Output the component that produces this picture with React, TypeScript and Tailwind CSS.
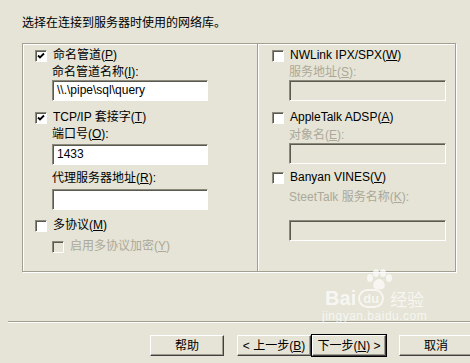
import React from 'react';

const FONT = { fontFamily: '"Liberation Sans", "Noto Sans CJK SC", sans-serif' };

const Key = ({ k }: { k: string }) => <>(<span className="underline underline-offset-[1px]">{k}</span>)</>;

const Check = ({ checked, disabled }: { checked?: boolean; disabled?: boolean }) => (
  <span
    className={`flex h-[12px] w-[12px] shrink-0 items-center justify-center border border-t-[#8a897b] border-l-[#8a897b] border-b-white border-r-white shadow-[inset_1px_1px_0_#5a5a50] ${
      disabled ? 'bg-[#e5e4d6]' : 'bg-white'
    }`}
  >
    {checked && (
      <svg width="8" height="8" viewBox="0 0 8 8">
        <path d="M1 3.5 L3 5.5 L7 1.5" stroke="#000" strokeWidth="1.8" fill="none" />
      </svg>
    )}
  </span>
);

const Field = ({ value, disabled, w }: { value?: string; disabled?: boolean; w: string }) => (
  <div
    className={`${w} h-[21px] border border-t-[#8a897b] border-l-[#8a897b] border-b-white border-r-white shadow-[inset_1px_1px_0_#5a5a50] px-[4px] text-[12px] leading-[19px] ${
      disabled ? 'bg-[#e5e4d6]' : 'bg-white'
    }`}
  >
    {value}
  </div>
);

const Row = ({ checked, disabled, children, className = '' }: { checked?: boolean; disabled?: boolean; children: React.ReactNode; className?: string }) => (
  <div className={`flex h-[13px] items-center gap-[6px] ${className}`}>
    <Check checked={checked} disabled={disabled} />
    <span className={`text-[12px] leading-[13px] whitespace-nowrap ${disabled ? 'text-[#aca899]' : 'text-black'}`}>{children}</span>
  </div>
);

const Label = ({ children, disabled, className = '' }: { children: React.ReactNode; disabled?: boolean; className?: string }) => (
  <div className={`h-[13px] text-[12px] leading-[13px] whitespace-nowrap ${disabled ? 'text-[#aca899]' : 'text-black'} ${className}`}>{children}</div>
);

const Btn = ({ children, primary, className = '' }: { children: React.ReactNode; primary?: boolean; className?: string }) => (
  <div className={`${primary ? 'border border-black' : ''} ${className}`}>
    <div className="flex h-[21px] w-[74px] items-center justify-center border border-t-white border-l-white border-b-[#404040] border-r-[#404040] shadow-[inset_-1px_-1px_0_#9d9c8e] text-[12px] text-black whitespace-nowrap">
      {children}
    </div>
  </div>
);

export default function App() {
  return (
    <div className="relative h-[363px] w-[470px] overflow-hidden bg-[#e5e4d6] text-black" style={FONT}>
      <div className="pl-[22px] pt-[16px] text-[12px] leading-[14px]">选择在连接到服务器时使用的网络库。</div>

      <div className="ml-[22px] mt-[13px] flex h-[229px] w-[434px] border border-[#a09f90] shadow-[inset_1px_1px_0_#fff,1px_1px_0_#fff]">
        {/* left column */}
        <div className="flex w-[234px] flex-col pl-[12px] pt-[5px]">
          <Row checked>命名管道<Key k="P" /></Row>
          <Label className="ml-[17px] mt-[4px]">命名管道名称<Key k="I" />:</Label>
          <div className="ml-[17px] mt-[1px]"><Field w="w-[156px]" value="\\.\pipe\sql\query" /></div>
          <Row checked className="mt-[10px]">TCP/IP 套接字<Key k="T" /></Row>
          <Label className="ml-[17px] mt-[4px]">端口号<Key k="O" />:</Label>
          <div className="ml-[17px] mt-[3px]"><Field w="w-[156px]" value="1433" /></div>
          <Label className="ml-[17px] mt-[7px]">代理服务器地址<Key k="R" />:</Label>
          <div className="ml-[17px] mt-[4px]"><Field w="w-[156px]" /></div>
          <Row className="mt-[9px]">多协议<Key k="M" /></Row>
          <Row disabled className="ml-[17px] mt-[8px]">启用多协议加密<Key k="Y" /></Row>
        </div>
        <div className="w-px bg-[#a09f90]" />
        <div className="w-px bg-white" />
        {/* right column */}
        <div className="flex flex-1 flex-col pl-[13px] pt-[5px]">
          <Row>NWLink IPX/SPX<Key k="W" /></Row>
          <Label disabled className="ml-[17px] mt-[4px]">服务地址<Key k="S" />:</Label>
          <div className="ml-[17px] mt-[1px]"><Field w="w-[157px]" disabled /></div>
          <Row className="mt-[10px]">AppleTalk ADSP<Key k="A" /></Row>
          <Label disabled className="ml-[17px] mt-[5px]">对象名<Key k="E" />:</Label>
          <div className="ml-[17px] mt-[1px]"><Field w="w-[157px]" disabled /></div>
          <Row className="mt-[7px]">Banyan VINES<Key k="V" /></Row>
          <Label disabled className="ml-[17px] mt-[7px]">SteetTalk 服务名称<Key k="K" />:</Label>
          <div className="ml-[17px] mt-[16px]"><Field w="w-[157px]" disabled /></div>
        </div>
      </div>

      <div className="ml-[8px] mt-[49px] h-px bg-[#a09f90]" />
      <div className="ml-[8px] h-px bg-white" />

      <div className="mt-[11px] flex pl-[150px]">
        <Btn className="mt-px">帮助</Btn>
        <Btn className="ml-[13px] mt-px">&lt; 上一步<Key k="B" /></Btn>
        <Btn primary>下一步<Key k="N" /> &gt;</Btn>
        <Btn className="ml-[12px] mt-px">取消</Btn>
      </div>

      {/* watermark */}
      <div className="pointer-events-none absolute left-[322px] top-[288px] flex flex-col items-center text-white opacity-70">
        <svg className="absolute left-[44px] top-[-19px]" width="26" height="22" viewBox="0 0 26 22" fill="#fff">
          <ellipse cx="4" cy="9" rx="3" ry="4" />
          <ellipse cx="10" cy="4" rx="3" ry="4" />
          <ellipse cx="17" cy="4" rx="3" ry="4" />
          <ellipse cx="23" cy="9" rx="3" ry="4" />
          <path d="M13 10 C8 10 6 17 8 19 C10 21 16 21 18 19 C20 17 18 10 13 10 Z" />
        </svg>
        <div className="flex items-end gap-[2px]">
          <span className="text-[20px] font-bold leading-[20px]" style={{ fontFamily: '"Liberation Sans", sans-serif' }}>Bai</span>
          <span className="rounded-full border-2 border-white px-[3px] text-[13px] font-bold leading-[15px]">du</span>
          <span className="ml-[4px] text-[17px] leading-[19px]" style={{ fontFamily: '"Noto Sans CJK SC", sans-serif' }}>经验</span>
        </div>
        <span className="mt-[2px] text-[12px] leading-[12px] tracking-[0.5px]" style={{ fontFamily: '"Liberation Sans", sans-serif' }}>jingyan.baidu.com</span>
      </div>
    </div>
  );
}
